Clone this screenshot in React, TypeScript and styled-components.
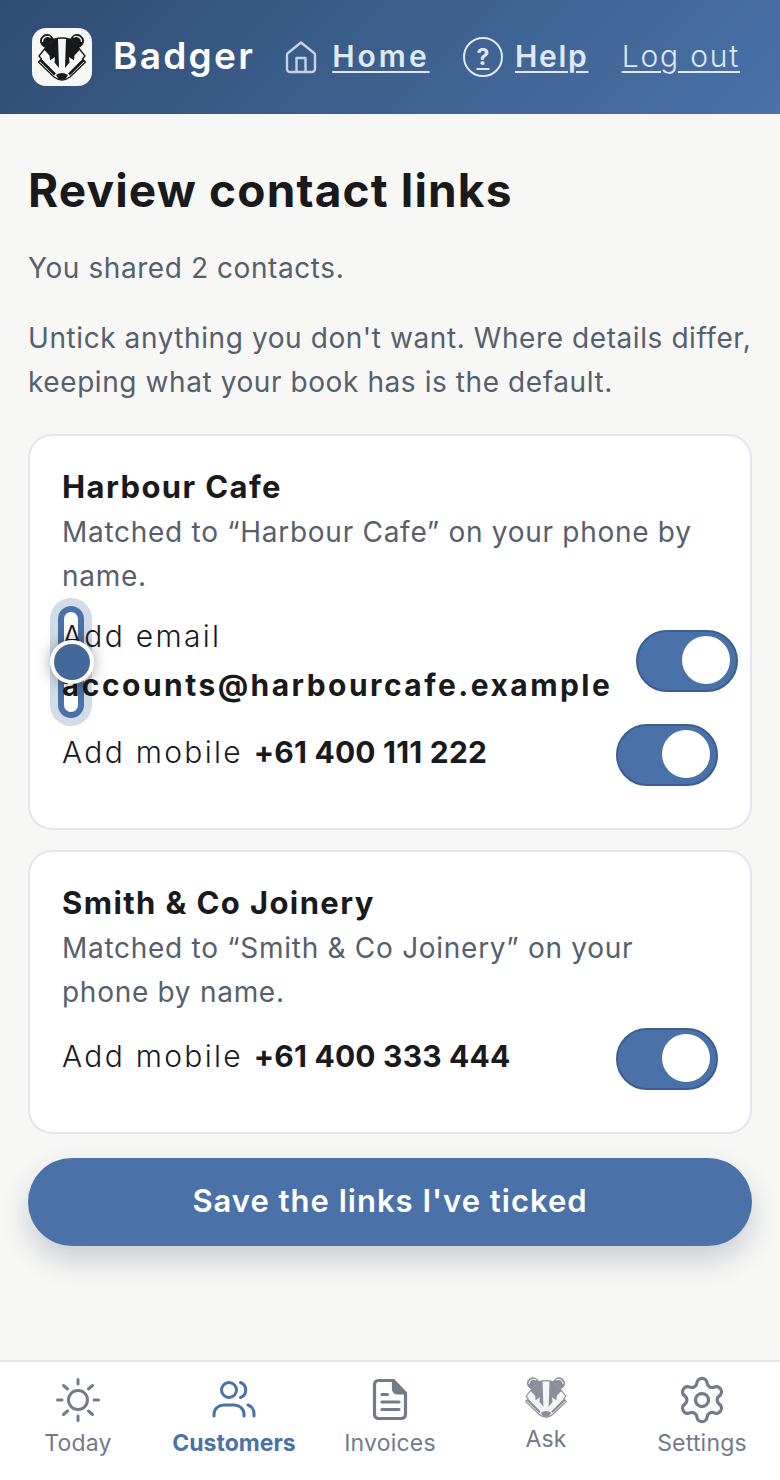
import React from 'react';
import styled, { createGlobalStyle } from 'styled-components';
import { Settings } from 'lucide-react';

const GlobalStyle = createGlobalStyle`
  html, body {
    margin: 0;
    padding: 0;
    background: #f7f7f5;
    font-family: Inter, "Noto Sans", sans-serif;
    color: #1a1a1d;
  }
  * { box-sizing: border-box; }
`;

const Page = styled.div`
  width: 780px;
  height: 1480px;
  display: flex;
  flex-direction: column;
  overflow: hidden;
`;

const Header = styled.header`
  height: 114px;
  flex: none;
  display: flex;
  align-items: center;
  padding: 0 40px 0 32px;
  background: linear-gradient(135deg, #2f4d73 0%, #4a72a8 100%);
`;

const LogoTile = styled.div`
  width: 60px;
  height: 58px;
  flex: none;
  border-radius: 14px;
  background: #f7f7f5;
`;

const Brand = styled.span`
  margin: 0 0 3px 21px;
  font-size: 37px;
  font-weight: 600;
  letter-spacing: 2.3px;
  color: #fff;
`;

const Nav = styled.nav`
  margin-left: 30px;
  flex: 1;
  display: flex;
  align-items: center;
  justify-content: space-between;
`;

const NavItem = styled.span<{ $gap: number }>`
  display: flex;
  align-items: center;
  gap: ${(p) => p.$gap}px;
`;

const NavLink = styled.a<{ $light?: boolean; $track?: number }>`
  margin-bottom: 3px;
  font-size: 30px;
  font-weight: ${(p) => (p.$light ? 300 : 600)};
  letter-spacing: ${(p) => p.$track ?? 1.8}px;
  color: #dfe8f3;
  text-decoration: underline;
  text-decoration-thickness: 2px;
  text-underline-offset: 4px;
`;

const HelpBadge = styled.span`
  width: 40px;
  height: 40px;
  border: 2px solid #dfe8f3;
  border-radius: 50%;
  display: flex;
  align-items: center;
  justify-content: center;
  font-size: 23px;
  font-weight: 700;
  color: #dfe8f3;
  text-decoration: underline;
  text-decoration-thickness: 2px;
  text-underline-offset: 3px;
`;

const Main = styled.main`
  flex: 1;
  padding: 46px 28px 0;
`;

const Title = styled.h1`
  margin: 0;
  font-size: 46px;
  line-height: 60px;
  font-weight: 700;
  letter-spacing: 1.15px;
  color: #1a1a1d;
`;

const Lead = styled.p`
  margin: 26px 0 0;
  font-size: 28px;
  line-height: 44px;
  letter-spacing: 0.58px;
  color: #56606d;
`;

const Card = styled.section`
  margin-top: 20px;
  padding: 30px 32px 42px;
  border: 2px solid #e2e5ee;
  border-radius: 24px;
  background: #fff;
  &:first-of-type { margin-top: 30px; }
`;

const CardName = styled.h2`
  margin: 0 0 2px;
  font-size: 31px;
  line-height: 42px;
  font-weight: 700;
  letter-spacing: 1.4px;
  color: #1a1a1d;
`;

const Matched = styled.p`
  margin: 0;
  font-size: 28px;
  line-height: 44px;
  letter-spacing: 0.72px;
  color: #56606d;
`;

const LinkRow = styled.div`
  display: flex;
  align-items: center;
  justify-content: space-between;
  position: relative;
  min-height: 62px;
  margin-top: 14px;
  font-size: 30px;
  line-height: 49px;
  font-weight: 300;
  color: #1a1a1d;
`;

const RowText = styled.span<{ $lift?: boolean }>`
  position: relative;
  z-index: 1;
  margin-bottom: ${(p) => (p.$lift ? '5px' : '0')};
  letter-spacing: 2.3px;
`;

const Value = styled.b<{ $wide?: boolean }>`
  font-weight: 700;
  letter-spacing: ${(p) => (p.$wide ? '2.45px' : '0.2px')};
`;

const Switch = styled.span<{ $shift?: boolean }>`
  flex: none;
  width: 102px;
  height: 62px;
  padding: 4px 6px;
  margin-right: ${(p) => (p.$shift ? '-20px' : '0')};
  border: 2px solid #3a5f90;
  border-radius: 31px;
  background: #4a72a8;
  display: flex;
  justify-content: flex-end;
  &::after {
    content: '';
    width: 48px;
    height: 48px;
    border-radius: 50%;
    background: #fff;
  }
`;

/* the vertical range control that sits over the email row */
const RangeTrack = styled.span`
  position: absolute;
  left: -4px;
  top: -6px;
  width: 26px;
  height: 112px;
  border: 6px solid #4a72a8;
  border-radius: 13px;
  background: #fff;
  box-shadow: 0 0 0 8px #d2dce8;
`;

const RangeThumb = styled.span`
  position: absolute;
  z-index: 2;
  left: -12px;
  top: 28px;
  width: 44px;
  height: 44px;
  border: 4px solid #fff;
  border-radius: 50%;
  background: #44689a;
  box-shadow: 0 0 16px rgba(0, 0, 0, 0.35);
`;

const SaveButton = styled.button`
  width: 100%;
  height: 88px;
  margin-top: 24px;
  padding: 0 0 4px;
  border: none;
  border-radius: 44px;
  background: #4a72a8;
  box-shadow: 0 14px 28px rgba(40, 60, 90, 0.22);
  color: #fff;
  font-family: inherit;
  font-size: 31px;
  font-weight: 600;
  letter-spacing: 1px;
`;

const TabBar = styled.nav`
  height: 120px;
  flex: none;
  display: grid;
  grid-template-columns: repeat(5, 1fr);
  padding-top: 15px;
  border-top: 2px solid #e2e5ee;
  background: #fff;
`;

const Tab = styled.div<{ $active?: boolean; $ask?: boolean }>`
  display: flex;
  flex-direction: column;
  align-items: center;
  gap: ${(p) => (p.$ask ? '2px' : '4px')};
  margin-top: ${(p) => (p.$ask ? '-2px' : '0')};
  font-size: 23px;
  line-height: 32px;
  letter-spacing: ${(p) => (p.$active ? '0' : '0.2px')};
  font-weight: ${(p) => (p.$active ? 700 : 400)};
  color: ${(p) => (p.$active ? '#4a72a8' : '#737b88')};
`;

const IconSlot = styled.span`
  width: 46px;
  height: 46px;
  display: flex;
  align-items: center;
  justify-content: center;
  svg { flex: none; }
`;

const HomeIcon = () => (
  <svg width="32" height="34" viewBox="0 0 32 34" fill="none" stroke="#c4d2e5" strokeWidth="2.4" strokeLinejoin="round">
    <path d="M16 2.5 L29 13 a2 2 0 0 1 1 2 V29 a3 3 0 0 1 -3 3 H5 a3 3 0 0 1 -3 -3 V15 a2 2 0 0 1 1 -2 Z" />
    <path d="M11.5 32 V18 H20.5 V32" />
  </svg>
);

const SunIcon = () => (
  <svg width="46" height="46" viewBox="0 0 46 46" fill="none" stroke="currentColor" strokeWidth="3" strokeLinecap="round">
    <circle cx="23" cy="23" r="9.5" />
    <path d="M23 2.5V7M23 39v4.5M2.5 23H7M39 23h4.5M8.5 8.5l4 3.5M37.5 8.5l-4 3.5M8.5 37.5l4-3.5M37.5 37.5l-4-3.5" />
  </svg>
);

const PeopleIcon = () => (
  <svg width="46" height="46" viewBox="0 0 46 46" fill="none" stroke="currentColor" strokeWidth="3" strokeLinecap="round">
    <circle cx="18" cy="13" r="7.5" />
    <path d="M3 39 v-2 a10 9 0 0 1 10 -9 h10 a10 9 0 0 1 10 9 v2" />
    <path d="M29.5 5.5 a8 8 0 0 1 0 15" />
    <path d="M37 28 a9 9 0 0 1 6 9 v2" />
  </svg>
);

const InvoiceIcon = () => (
  <svg width="46" height="46" viewBox="0 0 46 46" fill="none" stroke="currentColor" strokeWidth="3.2" strokeLinecap="round" strokeLinejoin="round">
    <path d="M11.5 3.5 H26.5 L38.5 16 V37.5 a4 4 0 0 1 -4 4 H11.5 a4 4 0 0 1 -4 -4 V7.5 a4 4 0 0 1 4 -4 Z" />
    <path d="M26.5 3.5 V12 a4 4 0 0 0 4 4 H38.5" fill="currentColor" />
    <path d="M15 17.5h5.5M15 25h17M15 32.5h17" />
  </svg>
);

const BadgerFace = ({ size, ink, face }: { size: number; ink: string; face: string }) => (
  <svg width={size} height={size} viewBox="0 0 60 58">
    {/* ears */}
    <circle cx="15" cy="12" r="6.5" fill={ink} stroke={ink} strokeWidth="1" />
    <circle cx="45" cy="12" r="6.5" fill={ink} stroke={ink} strokeWidth="1" />
    <path d="M10.5 13 a5 5 0 0 1 8-4.5M49.5 13 a5 5 0 0 0 -8-4.5" fill="none" stroke={face} strokeWidth="1.2" />
    {/* head */}
    <path d="M30 9 C25 9 21 10 18.5 12.5 L7 27 L9.5 30 L6.5 33 L22 48 Q30 54 38 48 L53.5 33 L50.5 30 L53 27 L41.5 12.5 C39 10 35 9 30 9 Z" fill={face} stroke={ink} strokeWidth="1.3" strokeLinejoin="round" />
    {/* dark bands through the eyes */}
    <path d="M20.5 11 L26 9.5 L27 39 L22.5 33.5 L23 28 L18 31.5 L17.5 26.5 L12 20.5 Z" fill={ink} />
    <path d="M39.5 11 L34 9.5 L33 39 L37.5 33.5 L37 28 L42 31.5 L42.5 26.5 L48 20.5 Z" fill={ink} />
    {/* jaw line */}
    <path d="M8.5 31 L23 45.5M51.5 31 L37 45.5" fill="none" stroke={ink} strokeWidth="2.6" />
    {/* nose */}
    <path d="M24 46 Q30 42 36 46 L33.5 50 Q30 51.5 26.5 50 Z" fill={ink} />
  </svg>
);

const App = () => (
  <Page>
    <GlobalStyle />
    <Header>
      <LogoTile>
        <BadgerFace size={60} ink="#17181b" face="#f7f7f5" />
      </LogoTile>
      <Brand>Badger</Brand>
      <Nav>
        <NavItem $gap={15}>
          <HomeIcon />
          <NavLink $track={3}>Home</NavLink>
        </NavItem>
        <NavItem $gap={12}>
          <HelpBadge>?</HelpBadge>
          <NavLink $track={1.7}>Help</NavLink>
        </NavItem>
        <NavLink $light>Log out</NavLink>
      </Nav>
    </Header>
    <Main>
      <Title>Review contact links</Title>
      <Lead>You shared 2 contacts.</Lead>
      <Lead>Untick anything you don't want. Where details differ, keeping what your book has is the default.</Lead>
      <Card>
        <CardName>Harbour Cafe</CardName>
        <Matched>Matched to “Harbour Cafe” on your phone by name.</Matched>
        <LinkRow>
          <RangeTrack />
          <RangeThumb />
          <RowText>Add email <Value $wide>accounts@harbourcafe.example</Value></RowText>
          <Switch $shift />
        </LinkRow>
        <LinkRow>
          <RowText $lift>Add mobile <Value>+61 400 111 222</Value></RowText>
          <Switch />
        </LinkRow>
      </Card>
      <Card>
        <CardName>Smith &amp; Co Joinery</CardName>
        <Matched>Matched to “Smith &amp; Co Joinery” on your phone by name.</Matched>
        <LinkRow>
          <RowText $lift>Add mobile <Value>+61 400 333 444</Value></RowText>
          <Switch />
        </LinkRow>
      </Card>
      <SaveButton>Save the links I've ticked</SaveButton>
    </Main>
    <TabBar>
      <Tab><IconSlot><SunIcon /></IconSlot>Today</Tab>
      <Tab $active><IconSlot><PeopleIcon /></IconSlot>Customers</Tab>
      <Tab><IconSlot><InvoiceIcon /></IconSlot>Invoices</Tab>
      <Tab $ask><IconSlot><BadgerFace size={52} ink="#8b8f99" face="#f4f4f4" /></IconSlot>Ask</Tab>
      <Tab><IconSlot><Settings size={52} strokeWidth={1.5} /></IconSlot>Settings</Tab>
    </TabBar>
  </Page>
);

export default App;
